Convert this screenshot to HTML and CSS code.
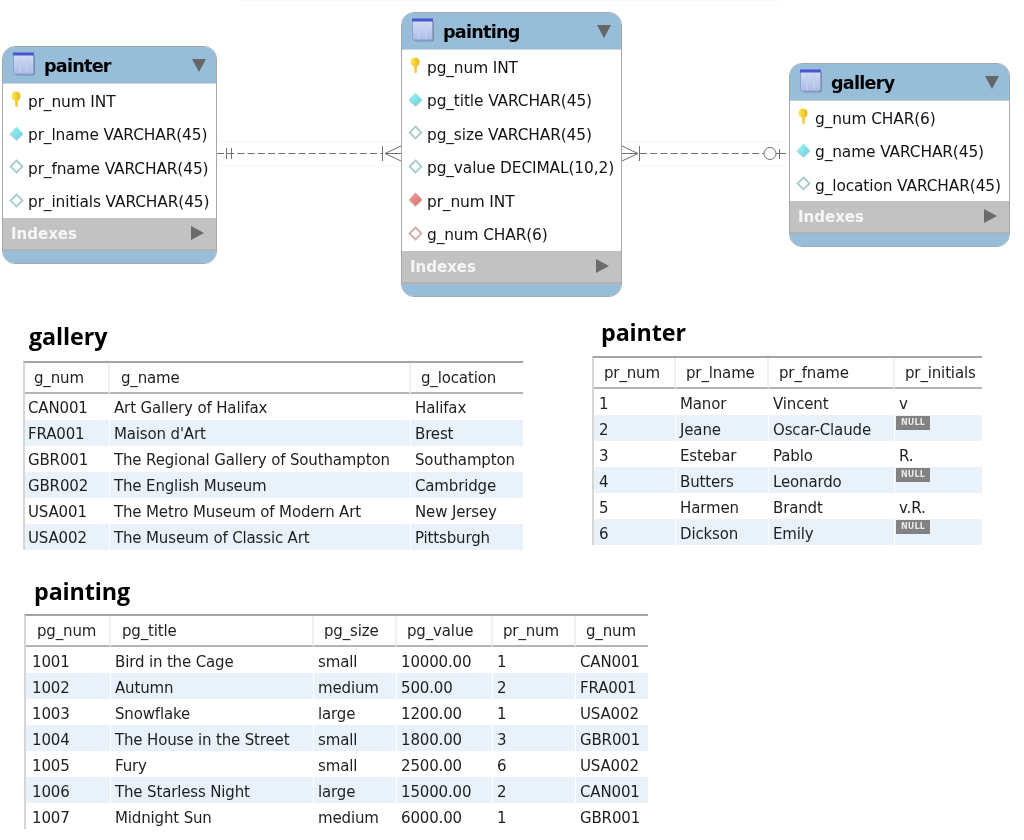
FILE: index.html
```html
<!DOCTYPE html>
<html lang="en">
<head>
<meta charset="utf-8">
<title>Art database schema</title>
<link rel="stylesheet" href="styles.css">
</head>
<body>
<svg class="defs" width="0" height="0" aria-hidden="true">
  <defs>
    <linearGradient id="tg" x1="0" y1="0" x2="0" y2="1"><stop offset="0" stop-color="#d8e0f4"/><stop offset="1" stop-color="#a9bde6"/></linearGradient>
    <linearGradient id="ky" x1="0" y1="0" x2="1" y2="0"><stop offset="0" stop-color="#ffe95a"/><stop offset="1" stop-color="#e9b512"/></linearGradient>
    <linearGradient id="cy" x1="0" y1="0" x2="1" y2="1"><stop offset="0" stop-color="#a6f2f4"/><stop offset="1" stop-color="#5fd4dc"/></linearGradient>
    <linearGradient id="rd" x1="0" y1="0" x2="1" y2="1"><stop offset="0" stop-color="#f0a5a2"/><stop offset="1" stop-color="#d96c6a"/></linearGradient>
    <symbol id="i-table" viewBox="0 0 22 23">
      <rect x="2" y="2" width="20" height="21" rx="2" fill="#7e8ea8"/>
      <rect x="0.5" y="0.5" width="20" height="21" rx="1.5" fill="url(#tg)" stroke="#8da3d6"/>
      <rect x="0" y="0" width="21" height="3" fill="#4a56d0"/>
      <path d="M7 4v16M14 4v16" stroke="#c3cff0" stroke-width="1.5"/>
    </symbol>
    <symbol id="i-key" viewBox="0 0 12 17">
      <path d="M6 0.5C9 0.5 10.5 2.6 10.5 5.2C10.5 7.4 9.2 8.7 8 9.6L7.6 15.4C7.5 16.4 5.6 16.4 5.5 15.4L4.8 9.6C3 8.7 1.5 7.4 1.5 5.2C1.5 2.6 3 0.5 6 0.5Z" fill="url(#ky)"/>
    </symbol>
    <symbol id="i-dia-cyan" viewBox="0 0 15 15"><path d="M7.5 1.5L14.5 8.5L7.5 15L0.5 8.5Z" fill="#c5cfd0"/><path d="M7.5 0.5L14 7.5L7.5 14L1 7.5Z" fill="url(#cy)"/></symbol>
    <symbol id="i-dia-open" viewBox="0 0 15 15"><path d="M7.5 1.5L13.5 7.5L7.5 13.5L1.5 7.5Z" fill="#fff" stroke="#a5cdcd" stroke-width="1.8"/></symbol>
    <symbol id="i-dia-red" viewBox="0 0 15 15"><path d="M7.5 1.5L14.5 8.5L7.5 15L0.5 8.5Z" fill="#d5c9c9"/><path d="M7.5 0.5L14 7.5L7.5 14L1 7.5Z" fill="url(#rd)"/></symbol>
    <symbol id="i-dia-pink" viewBox="0 0 15 15"><path d="M7.5 1.5L13.5 7.5L7.5 13.5L1.5 7.5Z" fill="#fff" stroke="#d3aaa8" stroke-width="1.8"/></symbol>
  </defs>
</svg>

<main class="page">
  <section class="diagram">
    <svg class="links" width="1024" height="300" viewBox="0 0 1024 300" aria-hidden="true">
      <g stroke="#f8f8f8" fill="none">
        <path d="M240 0.5H780M217 141.5H401M217 165.5H401M622 141.5H789M622 165.5H789"/>
      </g>
      <g stroke="#6f6f6f" fill="none" stroke-width="1">
        <path d="M217 153.5H382M640 153.5H764" stroke-dasharray="7 3.2"/>
        <path d="M226.5 148V159M231.5 148V159M382.5 146V161M385 153.5L401 146M385 153.5L401 161M385 153.5H401"/>
        <path d="M622 146L638 153.5L622 161M622 153.5H638M639.5 146V161"/>
        <circle cx="770" cy="153.5" r="6" fill="#fff"/>
        <path d="M776 153.5H786M779.5 149V159"/>
      </g>
    </svg>

    <article class="node node-painter">
      <header class="node-head"><svg class="ico-table"><use href="#i-table"/></svg><h2 class="node-title">painter</h2><span class="tri-down"></span></header>
      <ul class="fields">
        <li class="field"><svg class="ico-key"><use href="#i-key"/></svg>pr_num INT</li>
        <li class="field"><svg class="ico-dia"><use href="#i-dia-cyan"/></svg>pr_lname VARCHAR(45)</li>
        <li class="field"><svg class="ico-dia"><use href="#i-dia-open"/></svg>pr_fname VARCHAR(45)</li>
        <li class="field"><svg class="ico-dia"><use href="#i-dia-open"/></svg>pr_initials VARCHAR(45)</li>
      </ul>
      <div class="node-idx"><span>Indexes</span><span class="tri-right"></span></div>
      <div class="node-foot"></div>
    </article>

    <article class="node node-painting">
      <header class="node-head"><svg class="ico-table"><use href="#i-table"/></svg><h2 class="node-title">painting</h2><span class="tri-down"></span></header>
      <ul class="fields">
        <li class="field"><svg class="ico-key"><use href="#i-key"/></svg>pg_num INT</li>
        <li class="field"><svg class="ico-dia"><use href="#i-dia-cyan"/></svg>pg_title VARCHAR(45)</li>
        <li class="field"><svg class="ico-dia"><use href="#i-dia-open"/></svg>pg_size VARCHAR(45)</li>
        <li class="field"><svg class="ico-dia"><use href="#i-dia-open"/></svg>pg_value DECIMAL(10,2)</li>
        <li class="field"><svg class="ico-dia"><use href="#i-dia-red"/></svg>pr_num INT</li>
        <li class="field"><svg class="ico-dia"><use href="#i-dia-pink"/></svg>g_num CHAR(6)</li>
      </ul>
      <div class="node-idx"><span>Indexes</span><span class="tri-right"></span></div>
      <div class="node-foot"></div>
    </article>

    <article class="node node-gallery">
      <header class="node-head"><svg class="ico-table"><use href="#i-table"/></svg><h2 class="node-title">gallery</h2><span class="tri-down"></span></header>
      <ul class="fields">
        <li class="field"><svg class="ico-key"><use href="#i-key"/></svg>g_num CHAR(6)</li>
        <li class="field"><svg class="ico-dia"><use href="#i-dia-cyan"/></svg>g_name VARCHAR(45)</li>
        <li class="field"><svg class="ico-dia"><use href="#i-dia-open"/></svg>g_location VARCHAR(45)</li>
      </ul>
      <div class="node-idx"><span>Indexes</span><span class="tri-right"></span></div>
      <div class="node-foot"></div>
    </article>
  </section>

  <div class="results-row">
    <section class="result result-gallery">
      <h1 class="result-title">gallery</h1>
      <table class="grid">
        <colgroup><col class="g1"><col class="g2"><col class="g3"></colgroup>
        <thead><tr><th>g_num</th><th>g_name</th><th>g_location</th></tr></thead>
        <tbody>
          <tr><td>CAN001</td><td>Art Gallery of Halifax</td><td>Halifax</td></tr>
          <tr><td>FRA001</td><td>Maison d'Art</td><td>Brest</td></tr>
          <tr><td>GBR001</td><td>The Regional Gallery of Southampton</td><td>Southampton</td></tr>
          <tr><td>GBR002</td><td>The English Museum</td><td>Cambridge</td></tr>
          <tr><td>USA001</td><td>The Metro Museum of Modern Art</td><td>New Jersey</td></tr>
          <tr><td>USA002</td><td>The Museum of Classic Art</td><td>Pittsburgh</td></tr>
        </tbody>
      </table>
    </section>

    <section class="result result-painter">
      <h1 class="result-title">painter</h1>
      <table class="grid">
        <colgroup><col class="p1"><col class="p2"><col class="p3"><col class="p4"></colgroup>
        <thead><tr><th>pr_num</th><th>pr_lname</th><th>pr_fname</th><th>pr_initials</th></tr></thead>
        <tbody>
          <tr><td>1</td><td>Manor</td><td>Vincent</td><td>v</td></tr>
          <tr><td>2</td><td>Jeane</td><td>Oscar-Claude</td><td class="cell-null"><span class="null">NULL</span></td></tr>
          <tr><td>3</td><td>Estebar</td><td>Pablo</td><td>R.</td></tr>
          <tr><td>4</td><td>Butters</td><td>Leonardo</td><td class="cell-null"><span class="null">NULL</span></td></tr>
          <tr><td>5</td><td>Harmen</td><td>Brandt</td><td>v.R.</td></tr>
          <tr><td>6</td><td>Dickson</td><td>Emily</td><td class="cell-null"><span class="null">NULL</span></td></tr>
        </tbody>
      </table>
    </section>
  </div>

  <section class="result result-painting">
    <h1 class="result-title">painting</h1>
    <table class="grid">
      <colgroup><col class="t1"><col class="t2"><col class="t3"><col class="t4"><col class="t5"><col class="t6"></colgroup>
      <thead><tr><th>pg_num</th><th>pg_title</th><th>pg_size</th><th>pg_value</th><th>pr_num</th><th>g_num</th></tr></thead>
      <tbody>
        <tr><td>1001</td><td>Bird in the Cage</td><td>small</td><td>10000.00</td><td>1</td><td>CAN001</td></tr>
        <tr><td>1002</td><td>Autumn</td><td>medium</td><td>500.00</td><td>2</td><td>FRA001</td></tr>
        <tr><td>1003</td><td>Snowflake</td><td>large</td><td>1200.00</td><td>1</td><td>USA002</td></tr>
        <tr><td>1004</td><td>The House in the Street</td><td>small</td><td>1800.00</td><td>3</td><td>GBR001</td></tr>
        <tr><td>1005</td><td>Fury</td><td>small</td><td>2500.00</td><td>6</td><td>USA002</td></tr>
        <tr><td>1006</td><td>The Starless Night</td><td>large</td><td>15000.00</td><td>2</td><td>CAN001</td></tr>
        <tr><td>1007</td><td>Midnight Sun</td><td>medium</td><td>6000.00</td><td>1</td><td>GBR001</td></tr>
      </tbody>
    </table>
  </section>
</main>
</body>
</html>
```
FILE: styles.css
```css
* { box-sizing: border-box; }
html, body { margin: 0; padding: 0; background: #fff; }
body { width: 1024px; height: 840px; overflow: hidden; font-family: "DejaVu Sans", "Noto Sans", sans-serif; color: #141414; }
.defs { position: absolute; }
.page { display: flex; flex-direction: column; filter: blur(0.35px); }

/* ER diagram: free canvas */
.diagram { position: relative; height: 300px; }
.links { position: absolute; left: 0; top: 0; }
.node { position: absolute; border: 1px solid #a3a8ad; border-radius: 13px; overflow: hidden; background: #fff; display: flex; flex-direction: column; }
.node-painter { left: 2px; top: 46px; width: 215px; }
.node-painting { left: 401px; top: 12px; width: 221px; }
.node-gallery { left: 789px; top: 63px; width: 221px; }
.node-gallery .fields { margin-bottom: -1px; }

.node-head { height: 37px; background: #97bdd9; display: flex; align-items: center; padding: 0 10px; border-bottom: 1px solid #c9d3da; }
.ico-table { width: 22px; height: 24px; flex: none; margin-right: 9px; margin-top: -3px; }
.node-title { margin: 2px 0 0; font: bold 17.6px "DejaVu Sans", sans-serif; letter-spacing: -0.75px; color: #000; flex: 1; }
.tri-down { width: 0; height: 0; border-left: 7px solid transparent; border-right: 7px solid transparent; border-top: 13px solid #666; margin-top: 0; }
.tri-right { width: 0; height: 0; border-top: 7px solid transparent; border-bottom: 7px solid transparent; border-left: 13px solid #6b6b6b; margin-right: 2px; margin-top: -2px; }

.fields { list-style: none; padding: 0; border-left: 1px solid #8c8c8c; border-right: 1px solid #8c8c8c; margin: 0 -1px; }
.field { height: 33.5px; display: flex; align-items: center; font-size: 15.4px; letter-spacing: -0.12px; white-space: nowrap; padding: 2px 0 0 7px; }
.ico-dia { width: 15px; height: 15px; flex: none; margin-right: 4px; margin-left: -1px; margin-top: -4px; }
.ico-key { width: 12px; height: 17px; flex: none; margin-right: 6px; margin-top: -4px; }

.node-idx { height: 33px; background: #c2c2c2; border-bottom: 2px solid #b2b2b2; display: flex; align-items: center; justify-content: space-between; padding: 1px 10px 0 8px; font: bold 15px "DejaVu Sans", sans-serif; color: #f6f6f6; }
.node-foot { height: 12px; background: #97bdd9; }

/* Result tables */
.results-row { display: flex; align-items: flex-start; height: 272px; }
.result-title { margin: 0; font: bold 23.3px/30px "Open Sans", sans-serif; letter-spacing: -0.1px; color: #000; }
.result-gallery { margin-left: 23px; width: 500px; margin-top: 21px; }
.result-gallery .result-title { padding-left: 6px; height: 40px; }
.result-painter { margin-left: 69px; width: 390px; margin-top: 17px; }
.result-painter .result-title { padding-left: 9px; height: 39px; }
.result-painting { margin-left: 24px; width: 624px; margin-top: 4px; }
.result-painting .result-title { padding-left: 10px; height: 38px; }

.grid { table-layout: fixed; width: 100%; border-collapse: separate; border-spacing: 0; border-top: 2px solid #a4a4a4; border-left: 2px solid #d6d6d6; font-size: 15px; letter-spacing: -0.15px; color: #1f1f1f; }
.grid th { height: 31px; font-weight: normal; text-align: left; padding: 0 0 0 10px; border-bottom: 2px solid #b4b4b4; border-right: 2px solid #efefef; white-space: nowrap; overflow: hidden; }
.grid th:last-child { border-right: 0; }
.grid td { height: 26px; padding: 2px 0 0 4px; border-right: 1px solid #fff; white-space: nowrap; overflow: hidden; }
.grid td:last-child { border-right: 0; }
.grid tbody tr:nth-child(even) td { background: #e9f1fb; }
.result-gallery th:first-child { padding-left: 9px; }
.result-gallery th:nth-child(2) { padding-left: 11px; }
.result-painter td, .result-painting td { padding-top: 3px; }
.result-gallery td:first-child { padding-left: 3px; }
.result-painter td:first-child { padding-left: 5px; }
.result-painting td:first-child { padding-left: 6px; }
.result-painting th:first-child, .result-painting th:nth-child(2) { padding-left: 11px; }
.grid .cell-null { vertical-align: top; padding: 0; }
.g1 { width: 85px; } .g2 { width: 301px; } .g3 { width: 112px; }
.p1 { width: 82px; } .p2 { width: 93px; } .p3 { width: 126px; } .p4 { width: 87px; }
.t1 { width: 85px; } .t2 { width: 203px; } .t3 { width: 83px; } .t4 { width: 96px; } .t5 { width: 83px; } .t6 { width: 72px; }

.null { display: block; width: 34px; height: 14px; background: #828282; color: #e8e8e8; font: bold 8px/13px "DejaVu Sans", sans-serif; letter-spacing: 0.2px; text-align: center; margin: 1px 0 0 1px; }
```
